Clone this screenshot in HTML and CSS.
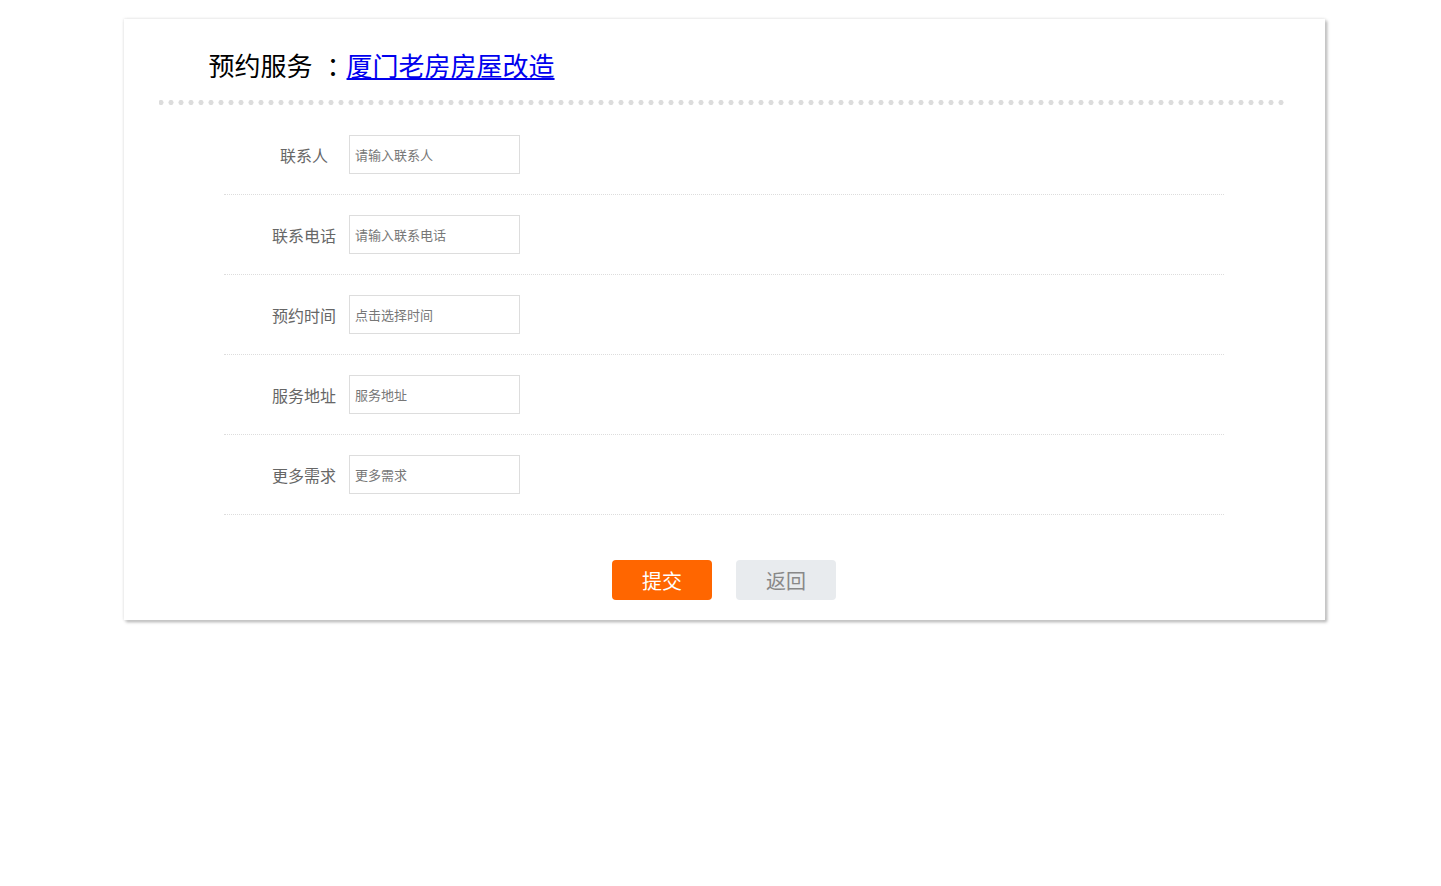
FILE: index.html
```html
<!DOCTYPE html>
<html lang="zh-CN">
<head>
<meta charset="UTF-8" />
<meta name="viewport" content="width=device-width, initial-scale=1" />
<title>预约服务</title>
<link rel="stylesheet" href="styles.css">
</head>
<body>

<div class="order-box">
  <h2 class="order-title">预约服务<span class="colon">：</span><a href="#">厦门老房房屋改造</a></h2>
  <div class="dots"></div>

  <form class="order-form" onsubmit="return false;">
    <div class="form-row">
      <label>联系人</label>
      <input type="text" placeholder="请输入联系人" />
    </div>
    <div class="form-row">
      <label>联系电话</label>
      <input type="text" placeholder="请输入联系电话" />
    </div>
    <div class="form-row">
      <label>预约时间</label>
      <input type="text" placeholder="点击选择时间" />
    </div>
    <div class="form-row">
      <label>服务地址</label>
      <input type="text" placeholder="服务地址" />
    </div>
    <div class="form-row">
      <label>更多需求</label>
      <input type="text" placeholder="更多需求" />
    </div>

    <div class="form-btns">
      <button type="submit" class="btn-submit">提交</button>
      <button type="button" class="btn-back">返回</button>
    </div>
  </form>
</div>

</body>
</html>
```

FILE: styles.css
```css
html {
  background: #fff;
}
body {
  margin: 0;
  padding: 19px 0 40px 7px;
  font-family: "Microsoft YaHei", "Noto Sans CJK SC", sans-serif;
}
.order-box {
  width: 1201px;
  margin: 0 auto;
  box-sizing: border-box;
  padding: 28px 35px 20px;
  background: #fff;
  box-shadow: 0 0 3px #ddd, 2px 2px 3px #aaa;
}
.order-title {
  margin: 0;
  padding-left: 50px;
  font-size: 26px;
  font-weight: normal;
  line-height: 36px;
  color: #000;
}
.order-title .colon {
  margin-left: 14px;
  letter-spacing: -6px;
}
.order-title a {
  color: #0000ee;
  text-decoration: underline;
}
.dots {
  height: 5px;
  margin: 17px 0 10px;
  width: 1128px;
  background-image: radial-gradient(circle, #dcdcdc 2.3px, transparent 2.8px);
  background-size: 10px 5px;
  background-position: -3px 0;
  background-repeat: repeat-x;
}
.order-form {
  width: 1000px;
  margin: 0 auto;
}
.form-row {
  display: flex;
  align-items: center;
  padding: 20px 0;
  border-bottom: 1px dotted #ddd;
}
.form-row label {
  width: 64px;
  margin: 0 13px 0 48px;
  text-align: center;
  white-space: nowrap;
  font-size: 16px;
  color: #666;
}
.form-row input {
  width: 171px;
  height: 39px;
  box-sizing: border-box;
  padding: 0 5px;
  border: 1px solid #ddd;
  font-family: inherit;
  font-size: 13px;
  color: #333;
  outline: none;
}
.form-row input::placeholder {
  color: #777;
}
.form-btns {
  display: flex;
  justify-content: center;
  gap: 24px;
  margin-top: 45px;
}
.form-btns button {
  width: 100px;
  height: 40px;
  border: none;
  border-radius: 4px;
  font-family: inherit;
  font-size: 20px;
  cursor: pointer;
}
.btn-submit {
  background: #ff6600;
  color: #fff;
}
.btn-back {
  background: #e8ebee;
  color: #888;
}
```
